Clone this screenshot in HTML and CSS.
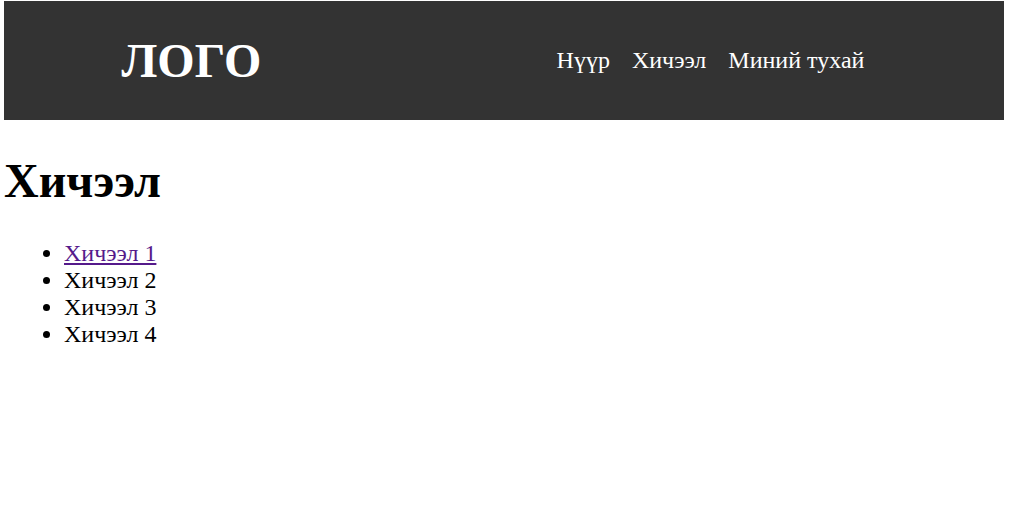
FILE: index.html
```html
<!DOCTYPE html>
<html lang="mn">
<head>
<meta charset="utf-8">
<title>Хичээл</title>
<link rel="stylesheet" href="styles.css">
</head>
<body>
<header class="header">
  <h1 class="logo">ЛОГО</h1>
  <nav>
    <ul class="nav-list">
      <li><a href="#home">Нүүр</a></li>
      <li><a href="#lessons">Хичээл</a></li>
      <li><a href="#about">Миний тухай</a></li>
    </ul>
  </nav>
</header>
<main>
  <h1 class="title">Хичээл</h1>
  <ul class="lessons">
    <li><a class="lesson-link" href="#lesson-1">Хичээл 1</a></li>
    <li>Хичээл 2</li>
    <li>Хичээл 3</li>
    <li>Хичээл 4</li>
  </ul>
</main>
</body>
</html>
```

FILE: styles.css
```css
body {
  margin: 1px 6px 0 4px;
  background: #fff;
  color: #000;
  font-family: "Liberation Serif", "Times New Roman", serif;
  font-size: 24px;
  line-height: 27px;
}

.header {
  display: flex;
  justify-content: space-around;
  align-items: center;
  padding: 32px 0;
  background: #333;
  color: #fff;
}

.logo,
.title {
  margin: 0;
  font-size: 48px;
  line-height: 55px;
}

.nav-list {
  display: flex;
  gap: 22px;
  margin: 0;
  padding: 0 22px 0 60px;
  list-style: none;
}

.nav-list a {
  color: #fff;
  text-decoration: none;
}

.title {
  margin: 33px 0 32px;
}

.lessons {
  margin: 0;
  padding-left: 60px;
}

.lesson-link {
  color: #551a8b;
}
```
